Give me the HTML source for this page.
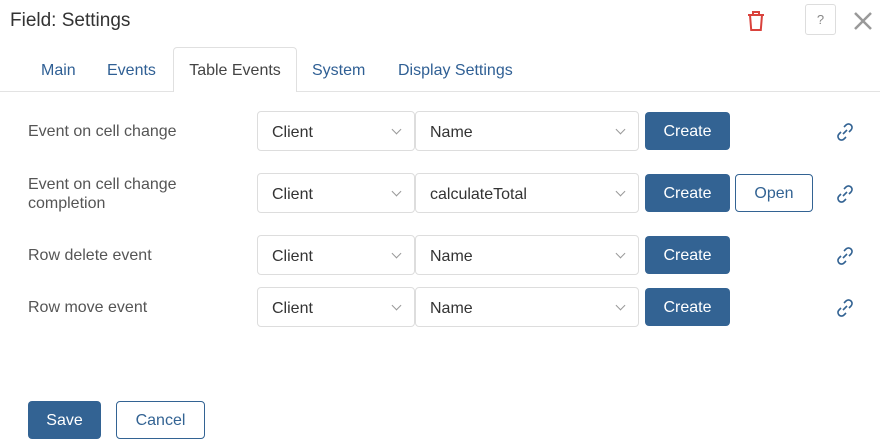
<!DOCTYPE html><html><head><style>
body{margin:0;width:880px;height:446px;background:#fff;font-family:"Liberation Sans",sans-serif;position:relative;overflow:hidden}
.a{position:absolute}
.t{left:10px;top:10px;font-size:19px;color:#333}
.tab{top:62px;font-size:16px;color:#2f5f94}
.line{left:0;top:91px;width:880px;height:1px;background:#e3e3e3}
.act{left:173px;top:47px;width:124px;height:45px;border:1px solid #e0e0e0;border-bottom:none;border-radius:4px 4px 0 0;background:#fff;font-size:16px;color:#444;text-align:center;line-height:46px;box-sizing:border-box}
.lbl{left:28px;font-size:16px;color:#555;line-height:19px}
.sel{height:40px;border:1px solid #ddd;border-radius:4px;box-sizing:border-box;font-size:16px;color:#333;line-height:41px;padding-left:14px}
.sel:after{content:"";position:absolute;right:14px;top:14px;width:6px;height:6px;border-right:1px solid #999;border-bottom:1px solid #999;transform:rotate(45deg)}
.btn{height:38px;border-radius:4px;box-sizing:border-box;font-size:16px;text-align:center;line-height:40px}
.pr{background:#336393;color:#fff}
.ol{border:1px solid #336393;color:#336393;line-height:38px;background:#fff}
</style></head><body>
<div class="a t">Field: Settings</div>
<svg class="a" style="left:746px;top:10px" width="20" height="22" viewBox="0 0 20 22"><path d="M2 5h16M7 5V2h6v3M4 5l1.2 15h9.6L16 5" fill="none" stroke="#d9423c" stroke-width="2"/></svg>
<div class="a" style="left:805px;top:4px;width:31px;height:31px;border:1px solid #ddd;border-radius:3px;box-sizing:border-box;text-align:center;line-height:30px;font-size:13px;color:#888">?</div>
<svg class="a" style="left:853px;top:11px" width="20" height="20"><path d="M2 2L18 18M18 2L2 18" stroke="#999" stroke-width="2.5"/></svg>
<div class="a line"></div>
<div class="a tab" style="left:41px">Main</div>
<div class="a tab" style="left:107px">Events</div>
<div class="a act">Table Events</div>
<div class="a tab" style="left:312px">System</div>
<div class="a tab" style="left:398px">Display Settings</div>

<div class="a lbl" style="top:122px">Event on cell change</div>
<div class="a lbl" style="top:175px">Event on cell change<br>completion</div>
<div class="a lbl" style="top:246px">Row delete event</div>
<div class="a lbl" style="top:298px">Row move event</div>

<div class="a sel" style="left:257px;top:111px;width:158px">Client</div>
<div class="a sel" style="left:415px;top:111px;width:224px">Name</div>
<div class="a btn pr" style="left:645px;top:112px;width:85px">Create</div>

<div class="a sel" style="left:257px;top:173px;width:158px">Client</div>
<div class="a sel" style="left:415px;top:173px;width:224px">calculateTotal</div>
<div class="a btn pr" style="left:645px;top:174px;width:85px">Create</div>
<div class="a btn ol" style="left:735px;top:174px;width:78px">Open</div>

<div class="a sel" style="left:257px;top:235px;width:158px">Client</div>
<div class="a sel" style="left:415px;top:235px;width:224px">Name</div>
<div class="a btn pr" style="left:645px;top:236px;width:85px">Create</div>

<div class="a sel" style="left:257px;top:287px;width:158px">Client</div>
<div class="a sel" style="left:415px;top:287px;width:224px">Name</div>
<div class="a btn pr" style="left:645px;top:288px;width:85px">Create</div>

<svg class="a" style="left:834px;top:121px" width="22" height="22" viewBox="0 0 22 22"><g fill="none" stroke="#336393" stroke-width="1.6"><path d="M9 13l4-4"/><path d="M10 6l2-2a3 3 0 0 1 5 5l-2 2"/><path d="M12 16l-2 2a3 3 0 0 1-5-5l2-2"/></g></svg>
<svg class="a" style="left:834px;top:183px" width="22" height="22" viewBox="0 0 22 22"><g fill="none" stroke="#336393" stroke-width="1.6"><path d="M9 13l4-4"/><path d="M10 6l2-2a3 3 0 0 1 5 5l-2 2"/><path d="M12 16l-2 2a3 3 0 0 1-5-5l2-2"/></g></svg>
<svg class="a" style="left:834px;top:245px" width="22" height="22" viewBox="0 0 22 22"><g fill="none" stroke="#336393" stroke-width="1.6"><path d="M9 13l4-4"/><path d="M10 6l2-2a3 3 0 0 1 5 5l-2 2"/><path d="M12 16l-2 2a3 3 0 0 1-5-5l2-2"/></g></svg>
<svg class="a" style="left:834px;top:297px" width="22" height="22" viewBox="0 0 22 22"><g fill="none" stroke="#336393" stroke-width="1.6"><path d="M9 13l4-4"/><path d="M10 6l2-2a3 3 0 0 1 5 5l-2 2"/><path d="M12 16l-2 2a3 3 0 0 1-5-5l2-2"/></g></svg>

<div class="a btn pr" style="left:28px;top:401px;width:73px">Save</div>
<div class="a btn ol" style="left:116px;top:401px;width:89px">Cancel</div>
</body></html>
